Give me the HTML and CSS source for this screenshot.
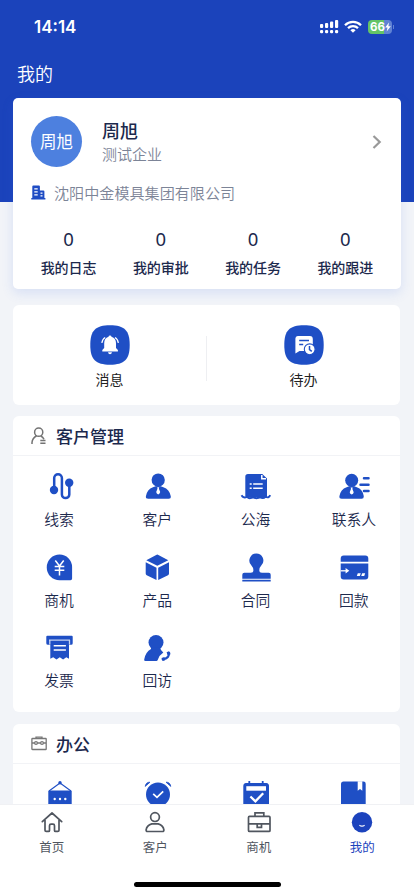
FILE: index.html
```html
<!DOCTYPE html>
<html lang="zh-CN">
<head>
<meta charset="utf-8">
<meta name="viewport" content="width=device-width, initial-scale=1">
<title>我的</title>
<link rel="stylesheet" href="styles.css">
</head>
<body>
<div class="app">
  <main class="content">
    <header class="hero">
      <div class="status">
        <span class="time">14:14</span>
        <div class="status-icons">
          <svg width="20" height="16" viewBox="0 0 20 16" fill="#fff"><rect x="1" y="5" width="3.2" height="4" rx="1"/><rect x="6" y="4" width="3.2" height="5" rx="1"/><rect x="11" y="2.6" width="3.2" height="6.4" rx="1"/><rect x="16" y="1" width="3.2" height="8" rx="1"/><rect x="1" y="11" width="3.2" height="3.2" rx="1.2"/><rect x="6" y="11" width="3.2" height="3.2" rx="1.2"/><rect x="11" y="11" width="3.2" height="3.2" rx="1.2"/><rect x="16" y="11" width="3.2" height="3.2" rx="1.2"/></svg>
          <svg class="wifi" width="18" height="14" viewBox="0 0 18 14" fill="none" stroke="#fff" stroke-width="2.3"><path d="M1 5.2a11.4 11.4 0 0 1 16 0M4 8.2a7.2 7.2 0 0 1 10 0"/><path d="M9 12.8L6.4 10.2a3.8 3.8 0 0 1 5.2 0z" fill="#fff" stroke="none"/></svg>
          <div class="battery"><span>66</span><svg width="6" height="10" viewBox="0 0 6 10" fill="#fff"><path d="M4 .5L.2 5.6h2.3L1.7 9.5 5.8 4.2H3.4z"/></svg></div>
          <i class="battery-tip"></i>
        </div>
      </div>
      <h1>我的</h1>
    </header>

    <section class="card profile">
      <div class="person">
        <div class="avatar">周旭</div>
        <div class="who"><h2>周旭</h2><p>测试企业</p></div>
        <svg class="chevron" width="10" height="14" viewBox="0 0 10 14" fill="none" stroke="#999" stroke-width="2.2"><path d="M1.5 1L7.7 7l-6.2 6"/></svg>
      </div>
      <div class="company">
        <svg width="15" height="15" viewBox="0 0 15 15"><path fill="#1f4cc4" d="M1.3 1.5q0-1 1-1h5.6q1 0 1 1v4h3.5q1 0 1 1v6.4h1V14.4H.3v-1.5h1z"/><path stroke="#fff" stroke-width="1.2" d="M3.3 3.9h3.4M3.3 6.9h3.4M3.3 9.9h3.4M9.5 8.2h2M9.5 10.8h2"/></svg>
        <span>沈阳中金模具集团有限公司</span>
      </div>
      <div class="stats">
        <div><b>0</b><span>我的日志</span></div>
        <div><b>0</b><span>我的审批</span></div>
        <div><b>0</b><span>我的任务</span></div>
        <div><b>0</b><span>我的跟进</span></div>
      </div>
    </section>

    <section class="card actions">
      <div class="action">
        <svg width="40" height="40" viewBox="0 0 40 40"><path fill="#1f4fc5" d="M20 .3C34.5 .3 39.7 5.5 39.7 20S34.5 39.7 20 39.7 .3 34.5 .3 20 5.5 .3 20 .3z"/><path fill="#fff" d="M20 10.4q1.3 0 1.5 1.3 4.5 1.3 4.5 6.5v4.7l1.9 2v1.5H12.3v-1.5l1.9-2v-4.7q0-5.2 4.3-6.5.2-1.3 1.5-1.3zM18 27.3h4q-.4 1.900-2 1.900t-2-1.900z"/><path d="M15.200 12.500q-3 1.800-3.300 5.500M25 12.500q3 1.800 3.300 5.500" fill="none" stroke="#fff" stroke-width="1.200"/></svg>
        <span>消息</span>
      </div>
      <i class="rule"></i>
      <div class="action">
        <svg width="40" height="40" viewBox="0 0 40 40"><path fill="#1f4fc5" d="M20 .3C34.5 .3 39.7 5.5 39.7 20S34.5 39.7 20 39.7 .3 34.5 .3 20 5.5 .3 20 .3z"/><path fill="#fff" d="M13.700 11h12.200q2.900 0 2.900 3v12H15.500l-4.100 2.500V13.500q0-2.500 2.300-2.500z"/><path d="M15.200 15.500h9.800M15.200 19.500h4" stroke="#1f4fc5" stroke-width="1.600"/><circle cx="25.700" cy="24.300" r="5.400" fill="#fff" stroke="#1f4fc5" stroke-width="1.100"/><path d="M25.500 21v3.600l2.300 1.800" fill="none" stroke="#1f4fc5" stroke-width="1.500"/></svg>
        <span>待办</span>
      </div>
    </section>

    <section class="card group">
      <div class="group-head">
        <svg width="16" height="18" viewBox="0 0 16 18" fill="none" stroke="#737373" stroke-width="1.500"><circle cx="7.700" cy="5.200" r="4.100"/><path d="M1 17v-1.500q.3-4.300 4.500-6.500M9.800 9q2.200 1 3.200 3.200M9.300 13.600h5.200M9.300 16.300h5.200"/></svg>
        <h3>客户管理</h3>
      </div>
      <div class="grid">
        <div class="cell"><svg viewBox="0 0 32 32"><circle cx="11" cy="19" r="4.200"/><circle cx="26.200" cy="11.700" r="4.200"/><path d="M11.200 19V7a3.850 3.850 0 0 1 7.700 0V23.400a3.700 3.700 0 0 0 7.400 0V12" fill="none" stroke="#1f4fc5" stroke-width="2.500"/></svg><span>线索</span></div>
        <div class="cell"><svg viewBox="0 0 32 32"><circle cx="17.200" cy="9" r="6.600"/><path d="M12 16.200q5.200-2.400 10.400 0 6 2 7.400 9 .3 2.500-2.200 2.500H7.200q-2.700 0-2.300-2.500 1.200-7 7.100-9z"/><path fill="#fff" d="M16.200 16.200h2l-.3 1.500 1.300 3.400q-.3 2-2 2.300-1.700-.3-2-2.300l1.300-3.400z"/></svg><span>客户</span></div>
        <div class="cell"><svg viewBox="0 0 32 32"><path d="M8 3h14.300L27 7.500V25.500q-2 2.500-4.500.5-3 3-6.500 0-3.500 3-6 0-2.300 2-4.700-.5V5.700Q5.300 3 8 3z"/><path d="M1.500 24.200q2 3.500 5.500 1.500 2.500 3 6 0 3.500 3 7 0 2.800 2.600 5.500 0 3.200 1.800 4.700-1.500" fill="none" stroke="#1f4fc5" stroke-width="1.900"/><path d="M21.800 4v3.700H26M9.700 13h2M13.200 13h9.500M9.700 17.300h2M13.200 17.300h9.500" fill="none" stroke="#fff" stroke-width="1.500"/></svg><span>公海</span></div>
        <div class="cell"><svg viewBox="0 0 32 32"><circle cx="13.700" cy="9.300" r="6.500"/><path d="M8.600 16.200q5.100-2.400 10.200 0 6 2 7 9 .1 2.500-2.200 2.500H3.700q-2.600 0-2.300-2.500 1.200-7 7.200-9z"/><path fill="#fff" d="M12.700 16.400h2l-.3 1.500 1.300 3.400q-.3 2-2 2.300-1.700-.3-2-2.300l1.300-3.400z"/><path d="M26 7.300h4.500M22.500 13.700h8M26 20h4.500" stroke="#1f4fc5" stroke-width="2.500" stroke-linecap="round"/></svg><span>联系人</span></div>
        <div class="cell"><svg viewBox="0 0 32 32"><path d="M16.600 2.600a12.500 12.500 0 0 1 12.500 12.500V26.600q0 1.700-1.600 1.700H16.600a12.800 12.800 0 0 1 0-25.700z"/><path d="M12.300 8.500l4.200 5.500 4.200-5.500M11.700 14.600h9.600M11.700 18.200h9.600M16.500 14v9.500" fill="none" stroke="#fff" stroke-width="1.500"/></svg><span>商机</span></div>
        <div class="cell"><svg viewBox="0 0 32 32"><path d="M15.200 2.900q1.100-.6 2.200 0L27.300 8.300 16.300 13.800 5.300 8.300zM4.700 10.300l10.800 5.400V28L5.700 23.200q-1-.5-1-1.600zM28 10.300l-10.800 5.400V28l9.800-4.800q1-.5 1-1.600z"/></svg><span>产品</span></div>
        <div class="cell"><svg viewBox="0 0 32 32"><path d="M16.300 1.500a7 7 0 0 1 5.300 11.600q-2.300 2.600-2.300 5.200 0 2.500 2.700 2.500h6.700q2 0 2 2v4H2.300v-4q0-2 2-2h6.400q2.700 0 2.700-2.500 0-2.600-2.300-5.200A7 7 0 0 1 16.300 1.500zM2.300 27.700h28.400v1.800H2.300z"/></svg><span>合同</span></div>
        <div class="cell"><svg viewBox="0 0 32 32"><path d="M5.700 3.500h21.600q3 0 3 3v3.200H2.700V6.500q0-3 3-3zM2.700 11.500h27.600v13q0 3-3 3H5.700q-3 0-3-3z"/><path d="M2.700 18.800h6" stroke="#fff" stroke-width="1.300"/><path fill="#fff" d="M7.600 16l3.700 2.800-3.700 2.800zM19.800 21.300h3l-1 2.800h-3zM24.200 21.300h3l-1 2.800h-3z"/></svg><span>回款</span></div>
        <div class="cell"><svg viewBox="0 0 32 32"><path d="M4.300 3.800h24.400q1 0 1 1v6.500q0 1.500-1.500 1.500H26v13.900l-2.700-1.500-3.200 2.200-3.300-2.200-3.300 2.200-3.300-2.200-2.900 1.600v-14H5q-1.700 0-1.700-1.500V4.800q0-1 1-1z"/><path d="M6 8.100h21M6.800 8v4.500M26.500 8v4.500" fill="none" stroke="#fff" stroke-opacity=".75" stroke-width="1.300"/><path d="M10.700 13.700h12.200M10.700 18h12.200" stroke="#fff" stroke-width="1.600"/></svg><span>发票</span></div>
        <div class="cell"><svg viewBox="0 0 32 32"><circle cx="15" cy="10.500" r="7.500"/><path d="M10 15.500h9l1 2.500 2.300 2.500q-4 2.500-5.600 7.500-.3 1-1.300 1H4.500q-1.600 0-1.300-1.600Q4.500 20 10 17z"/><path d="M27.700 21q1.300 4.500-5.200 6.300" fill="none" stroke="#1f4fc5" stroke-width="2.200"/><path d="M25.600 20.200l2.300-.9q1.500.6 1.600 3l-2.900 1zM20.600 26l2.800-.9.900 3q-1.200.9-2.600.9-1.400-1-1.100-3z"/></svg><span>回访</span></div>
      </div>
    </section>

    <section class="card group">
      <div class="group-head">
        <svg width="16" height="18" viewBox="0 0 16 18" fill="none" stroke="#777" stroke-width="1.300"><rect x=".9" y="3.500" width="14.300" height="11" rx=".6"/><path d="M5 3.500V2.200h6v1.300M1 8h2.600M6.400 8h3.200M12.400 8H15"/><circle cx="5" cy="8" r="1.400"/><circle cx="11" cy="8" r="1.400"/></svg>
        <h3>办公</h3>
      </div>
      <div class="grid">
        <div class="cell"><svg viewBox="0 0 32 32"><path d="M6 12L17 4l11 8" fill="none" stroke="#1f4fc5" stroke-width="1.100"/><circle cx="17" cy="3.800" r="1.700"/><path d="M6.300 11.500h21.400q1 0 1 1V30H5.300V12.500q0-1 1-1z"/><g fill="#fff"><circle cx="11.700" cy="20" r="1.200"/><circle cx="17" cy="20" r="1.200"/><circle cx="22.300" cy="20" r="1.200"/></g></svg></div>
        <div class="cell"><svg viewBox="0 0 32 32"><circle cx="17" cy="15.500" r="12"/><path d="M4.200 7.400Q5 3 9 3.200zM29.800 7.400Q29 3 25 3.200z" stroke="#1f4fc5" stroke-width=".8"/><path d="M12.200 14.800l3.800 3.500 6.200-6" fill="none" stroke="#fff" stroke-width="1.700"/></svg></div>
        <div class="cell"><svg viewBox="0 0 32 32"><path d="M6 4h20.300q2.700.3 2.700 3V30H3.300V7Q3.300 4.300 6 4z"/><path fill="#fff" d="M6.300 7.200H26v4.500H6.300z"/><path d="M9.300 2v4.500M22.700 2v4.500" stroke="#1f4fc5" stroke-width="1.800"/><path d="M10.400 17.500l5 4.800 7.800-8" fill="none" stroke="#fff" stroke-width="2.300"/></svg></div>
        <div class="cell"><svg viewBox="0 0 32 32"><path d="M5.500 2.500h20q2.200 0 2.200 2.200V30H3V5q0-2.500 2.500-2.500z"/><path fill="#fff" d="M19.700 2.300h4.600v9.400L22 10l-2.300 1.700z"/></svg></div>
      </div>
    </section>
  </main>

  <nav class="tabbar">
    <div class="tabs">
      <div class="tab"><svg viewBox="0 0 28 28"><path d="M4.300 13.600L14 5l9.700 8.600M7 12.200v10q0 1.200 1.200 1.200h2.300q1 0 1-1v-4.600q0-1.600 1.500-1.600h2q1.500 0 1.500 1.600v4.600q0 1 1 1h2.300q1.200 0 1.200-1.200v-10" stroke-linejoin="round" stroke-linecap="round"/></svg><span>首页</span></div>
      <div class="tab"><svg viewBox="0 0 28 28"><circle cx="14" cy="9.100" r="4.400"/><path d="M10.800 15.900h6.400q5 1.300 5.700 6 .1 1.600-1.500 1.600H6.600q-1.600 0-1.500-1.600.7-4.700 5.700-6z"/></svg><span>客户</span></div>
      <div class="tab"><svg viewBox="0 0 28 28"><rect x="3.500" y="8.400" width="21.500" height="15" rx="1"/><path d="M10 8V4.900h8.800V8M3.500 15.900H25M12.200 16v3.300h4.300V16"/></svg><span>商机</span></div>
      <div class="tab active"><svg viewBox="0 0 28 28"><circle cx="14" cy="14.300" r="10.200" fill="#1c43bd" stroke="none"/><path d="M11.400 17.200q2.600 2 5.200 0" stroke="#fff" stroke-width="1.200"/></svg><span>我的</span></div>
    </div>
    <div class="home-bar"></div>
  </nav>
</div>
</body>
</html>
```

FILE: styles.css
```css
* { box-sizing: border-box; }
body, h1, h2, h3, p { margin: 0; }
body {
  font-family: "Noto Sans CJK SC", sans-serif;
  background: #f2f4f8;
  color: #1c294d;
}
svg { display: block; flex: none; }

.app {
  height: 896px;
  display: flex;
  flex-direction: column;
  overflow: hidden;
}
.content {
  flex: 1;
  min-height: 0;
  overflow: hidden;
}

.hero {
  height: 202px;
  background: #1b43bb;
  color: #fff;
}
.status {
  height: 53px;
  padding: 0 20px 0 34px;
  display: flex;
  align-items: center;
  justify-content: space-between;
}
.time {
  font: 600 17px/20px Inter, sans-serif;
}
.status-icons {
  display: flex;
  align-items: center;
}
.wifi { margin: 0 6px 0 5px; }
.battery {
  width: 24px;
  height: 14px;
  padding-left: 2px;
  border-radius: 4px;
  display: flex;
  align-items: center;
  background: linear-gradient(90deg, #65c466 66%, #5f82d4 66%);
  font: 700 11.5px/14px Inter, sans-serif;
}
.battery-tip {
  width: 1px;
  height: 4px;
  margin-left: 1px;
  background: #5f82d4;
}
h1 {
  padding: 7px 17px 0;
  font-size: 18px;
  line-height: 26px;
  font-weight: 350;
}

.card {
  margin: 0 14px 12px 13px;
  background: #fff;
  border-radius: 6px;
}
.profile {
  position: relative;
  height: 191px;
  margin: -104px 13px 16px;
  padding: 18px 9.5px 0;
  border-radius: 5px;
  box-shadow: 0 4px 12px rgba(60, 110, 230, .15);
}
.person {
  display: flex;
  align-items: center;
  height: 51px;
  padding: 0 10px 0 8.5px;
}
.avatar {
  width: 51px;
  height: 51px;
  margin-right: 20px;
  border-radius: 50%;
  background: #4d80df;
  color: #fff;
  font-size: 16.5px;
  line-height: 51px;
  text-align: center;
}
.who {
  flex: 1;
  margin-top: -2px;
}
h2 {
  font-size: 18px;
  line-height: 26px;
  font-weight: 500;
}
.who p {
  font-size: 15px;
  line-height: 22px;
  font-weight: 350;
  color: #7c8497;
}
.company {
  display: flex;
  align-items: center;
  height: 24px;
  margin-top: 13px;
  padding-left: 8.5px;
  gap: 8px;
  font-size: 15.1px;
  font-weight: 350;
  color: #7c8497;
}
.stats {
  display: grid;
  grid-template-columns: repeat(4, 1fr);
  margin: 23px 0 0;
  text-align: center;
}
.stats b {
  display: block;
  font: 400 18.5px/24px "Noto Sans", sans-serif;
}
.stats span {
  display: block;
  margin-top: 6px;
  font-size: 14px;
  line-height: 20px;
  font-weight: 500;
}

.actions {
  height: 100px;
  margin-bottom: 11px;
  padding-top: 20px;
  display: flex;
}
.action {
  flex: 1;
  display: flex;
  flex-direction: column;
  align-items: center;
  color: #222;
  font-size: 14px;
  line-height: 20px;
}
.action span { margin-top: 4px; }
.rule {
  width: 1px;
  height: 45px;
  margin-top: 11px;
  background: #eeeff2;
}

.group { height: 296px; }
.group-head {
  height: 40px;
  padding: 0 18px;
  display: flex;
  align-items: center;
  gap: 9px;
  border-bottom: 1px solid #f2f3f6;
}
h3 {
  font-size: 17px;
  line-height: 24px;
  font-weight: 500;
}
.grid {
  display: grid;
  grid-template-columns: repeat(4, 1fr);
  grid-auto-rows: 80.5px;
  margin: 0 -3px;
  padding-top: 15px;
}
.cell {
  display: flex;
  flex-direction: column;
  align-items: center;
  font-size: 14.8px;
  line-height: 22px;
  font-weight: 350;
}
.cell svg {
  width: 32px;
  height: 32px;
  margin-bottom: 5px;
  fill: #1f4fc5;
}

.tabbar {
  height: 92px;
  background: #fff;
  border-top: 1px solid #f0f1f4;
}
.tabs { display: flex; }
.tab {
  flex: 1;
  display: flex;
  flex-direction: column;
  align-items: center;
  padding-top: 3px;
  color: #50565f;
  font-size: 12.5px;
  line-height: 18px;
}
.tab svg {
  width: 28px;
  height: 28px;
  margin-bottom: 2px;
  fill: none;
  stroke: #50565f;
  stroke-width: 1.7;
}
.active { color: #1c43bd; }
.home-bar {
  width: 147px;
  height: 5px;
  margin: 26px auto 0;
  border-radius: 3px;
  background: #000;
}
```
